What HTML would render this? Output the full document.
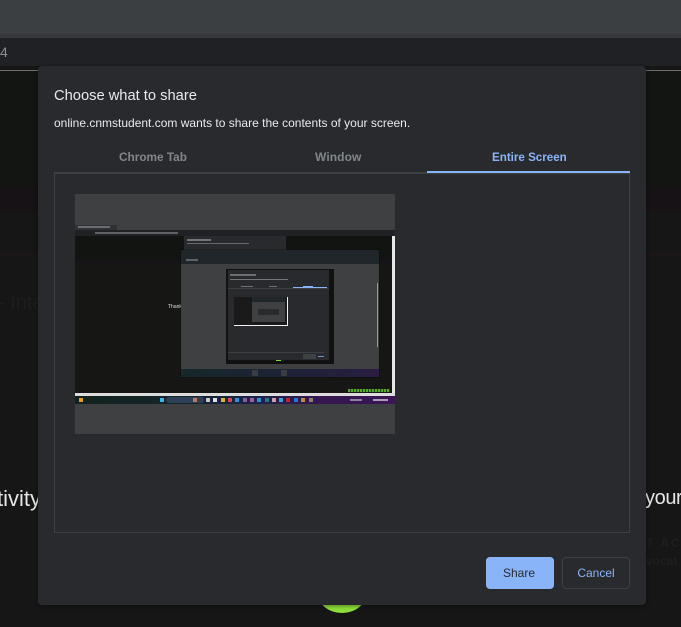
<!DOCTYPE html>
<html><head><meta charset="utf-8"><style>
html,body{margin:0;padding:0;background:#161616}
body{width:681px;height:627px;position:relative;overflow:hidden;font-family:"Liberation Sans",sans-serif}
.a,.t{position:absolute}
.t{white-space:nowrap}
.i{position:absolute;top:204px;width:4px;height:4px}
</style></head><body>
<!-- browser chrome -->
<div class="a" style="left:0;top:0;width:681px;height:34px;background:#3c3f42"></div>
<div class="a" style="left:0;top:34px;width:681px;height:4px;background:#36383b"></div>
<div class="a" style="left:0;top:38px;width:681px;height:28px;background:#202124"></div>
<div class="t" style="left:0;top:44px;font-size:14px;color:#8b8d90">4</div>
<div class="a" style="left:0;top:70px;width:681px;height:1px;background:#6a6c6e"></div>
<!-- page bg -->
<div class="a" style="left:0;top:71px;width:681px;height:115px;background:#131512"></div>
<div class="a" style="left:0;top:186px;width:681px;height:25px;background:#171216"></div>
<div class="a" style="left:0;top:211px;width:681px;height:42px;background:#151615"></div>
<div class="a" style="left:0;top:253px;width:681px;height:3px;background:#1b1617"></div>
<div class="a" style="left:0;top:256px;width:681px;height:371px;background:#161616"></div>
<div class="t" style="left:-2px;top:292px;font-size:20px;color:#1e1e1e">- Inte</div>
<div class="t" style="left:-3px;top:486px;font-size:22px;color:#e6e6e6">tivity</div>
<div class="t" style="left:645px;top:487px;font-size:20px;letter-spacing:-.4px;color:#e6e6e6">your</div>
<div class="t" style="left:646px;top:536px;font-size:12px;font-weight:bold;letter-spacing:2px;color:#1f1f1f">T AC</div>
<div class="t" style="left:646px;top:554px;font-size:12px;font-weight:bold;color:#1f1f1f">vocat</div>
<div class="a" style="left:317px;top:570px;width:50px;height:43px;border-radius:50%;background:#8fe03c"></div>
<!-- dialog -->
<div class="a" style="left:38px;top:66px;width:608px;height:539px;background:#292a2d;border-radius:4px;box-shadow:0 1px 5px rgba(0,0,0,.45)"></div>
<div class="t" style="left:54px;top:87px;font-size:14.7px;line-height:18px;color:#e8eaed">Choose what to share</div>
<div class="t" style="left:54px;top:116px;font-size:12px;line-height:15px;color:#e8eaed">online.cnmstudent.com wants to share the contents of your screen.</div>
<div class="t" style="left:119px;top:150px;font-size:11.8px;line-height:15px;font-weight:bold;color:#80868b">Chrome Tab</div>
<div class="t" style="left:315px;top:150px;font-size:12px;line-height:15px;font-weight:bold;letter-spacing:.1px;color:#80868b">Window</div>
<div class="t" style="left:492px;top:150px;font-size:11.6px;line-height:15px;font-weight:bold;color:#8ab4f8">Entire Screen</div>
<div class="a" style="left:54px;top:172px;width:576px;height:361px;box-sizing:border-box;border:1px solid #3c4043;border-top:2px solid #3c4043"></div>
<div class="a" style="left:427px;top:171px;width:203px;height:2px;background:#8ab4f8"></div>
<!-- thumbnail -->
<div class="a" style="left:75px;top:194px;width:320px;height:240px;background:#3f4042;overflow:hidden">
  <div class="a" style="left:0;top:31px;width:42px;height:5px;background:#303134"></div>
  <div class="a" style="left:3px;top:32px;width:32px;height:2px;background:#6a6c70"></div>
  <div class="a" style="left:0;top:36px;width:320px;height:6px;background:#202124"></div>
  <div class="a" style="left:20px;top:38px;width:83px;height:2px;background:#5f6166"></div>
  <div class="a" style="left:0;top:42px;width:317px;height:157px;background:#161615"></div>
  <div class="a" style="left:0;top:42px;width:317px;height:24px;background:#121411"></div>
  <div class="a" style="left:0;top:66px;width:317px;height:3px;background:#18131a"></div>
  <div class="a" style="left:317px;top:42px;width:3px;height:157px;background:#e8e8e8"></div>
  <div class="a" style="left:0;top:199px;width:320px;height:3px;background:#dcdcdc"></div>
  <div class="a" style="left:0;top:202px;width:320px;height:8px;background:linear-gradient(90deg,#12231f 0,#14252a 35%,#1a2348 55%,#35174f 75%,#3a1655 100%)"></div>
  <i class="i" style="left:4px;background:#e89a20"></i>
  <i class="i" style="left:85px;background:#38b6e8"></i>
  <div class="a" style="left:91px;top:203px;width:38px;height:6px;border-radius:3px;background:#2f3f55"></div>
  <i class="i" style="left:118px;background:#b87a5a"></i>
  <i class="i" style="left:131px;background:#c8c8d0"></i>
  <i class="i" style="left:138px;background:#dfe0f0"></i>
  <i class="i" style="left:146px;background:#e0b030"></i>
  <i class="i" style="left:153px;background:#d8475c"></i>
  <i class="i" style="left:160px;background:#2f8fd8"></i>
  <i class="i" style="left:168px;background:#8a5a9c"></i>
  <i class="i" style="left:175px;background:#a0609c"></i>
  <i class="i" style="left:182px;background:#2f8fd8"></i>
  <i class="i" style="left:190px;background:#2f6f88"></i>
  <i class="i" style="left:197px;background:#c8a0b0"></i>
  <i class="i" style="left:204px;background:#3f9fd0"></i>
  <i class="i" style="left:211px;background:#c02030"></i>
  <i class="i" style="left:219px;background:#1f78c8"></i>
  <i class="i" style="left:226px;background:#c08a40"></i>
  <i class="i" style="left:234px;background:#8a8078"></i>
  <div class="a" style="left:275px;top:205px;width:12px;height:2px;background:#8a80a0"></div>
  <div class="a" style="left:298px;top:205px;width:15px;height:2px;background:#a89cb8"></div>
  <div class="a" style="left:273px;top:195px;width:42px;height:3px;background:repeating-linear-gradient(90deg,#58a82e 0 2px,#23451a 2px 3px)"></div>
  <!-- nested dialog behind -->
  <div class="a" style="left:109px;top:42px;width:102px;height:15px;background:#292a2d"></div>
  <div class="a" style="left:112px;top:45px;width:24px;height:2px;background:#74767a"></div>
  <div class="a" style="left:112px;top:49px;width:62px;height:1px;background:#666a70"></div>
  <div class="t" style="left:93px;top:110px;font-size:5px;line-height:6px;color:#e0e0e0">Thank</div>
  <!-- nested window -->
  <div class="a" style="left:106px;top:56px;width:198px;height:127px;background:#3f4042;box-shadow:0 0 1px #000"></div>
  <div class="a" style="left:106px;top:56px;width:198px;height:14px;background:#20262a"></div>
  <div class="a" style="left:106px;top:175px;width:198px;height:8px;background:linear-gradient(90deg,#17272a,#1e2238 60%,#2a1c42)"></div>
  <div class="a" style="left:111px;top:65px;width:12px;height:2px;background:#5f6266"></div>
  <div class="a" style="left:302px;top:89px;width:1px;height:64px;background:#9a9a9a"></div>
  <div class="a" style="left:151px;top:75px;width:108px;height:95px;background:#111"></div>
  <div class="a" style="left:153px;top:76px;width:101px;height:90px;background:#292a2d"></div>
  <div class="a" style="left:155px;top:80px;width:26px;height:2px;background:#6b6d70"></div>
  <div class="a" style="left:155px;top:85px;width:58px;height:1px;background:#74767a"></div>
  <div class="a" style="left:153px;top:94px;width:101px;height:1px;background:#3c4043"></div>
  <div class="a" style="left:218px;top:93px;width:34px;height:1px;background:#8ab4f8"></div>
  <div class="a" style="left:166px;top:92px;width:12px;height:1px;background:#70747a"></div>
  <div class="a" style="left:194px;top:92px;width:8px;height:1px;background:#70747a"></div>
  <div class="a" style="left:228px;top:92px;width:10px;height:1px;background:#8ab4f8"></div>
  <!-- nested thumb -->
  <div class="a" style="left:159px;top:103px;width:53px;height:28px;background:#1a1a1a;border-right:1px solid #f2f2f2;border-bottom:1px solid #f2f2f2"></div>
  <div class="a" style="left:177px;top:103px;width:33px;height:25px;background:#3f4042"></div>
  <div class="a" style="left:177px;top:103px;width:33px;height:5px;background:#20262a"></div>
  <div class="a" style="left:183px;top:115px;width:21px;height:6px;background:#292a2d"></div>
  <div class="a" style="left:153px;top:158px;width:96px;height:1px;background:#3c4043"></div>
  <div class="a" style="left:228px;top:160px;width:13px;height:5px;background:#3f4245"></div>
  <div class="a" style="left:243px;top:162px;width:6px;height:1px;background:#6f93d0"></div>
  <div class="a" style="left:201px;top:166px;width:5px;height:1px;background:#7fdc36"></div>
  <div class="a" style="left:177px;top:176px;width:6px;height:6px;background:#3a3d40"></div>
  <div class="a" style="left:206px;top:176px;width:6px;height:6px;background:#3a3d40"></div>
</div>
<!-- buttons -->
<div class="a" style="left:486px;top:557px;width:68px;height:32px;background:#8ab4f8;border-radius:4px"></div>
<div class="t" style="left:485px;top:557px;width:68px;height:32px;line-height:32px;text-align:center;font-size:12px;color:#292a2d">Share</div>
<div class="a" style="left:562px;top:557px;width:68px;height:32px;box-sizing:border-box;border:1px solid #3c4043;border-radius:4px"></div>
<div class="t" style="left:562px;top:557px;width:68px;height:32px;line-height:32px;text-align:center;font-size:12px;color:#8ab4f8">Cancel</div>
</body></html>
